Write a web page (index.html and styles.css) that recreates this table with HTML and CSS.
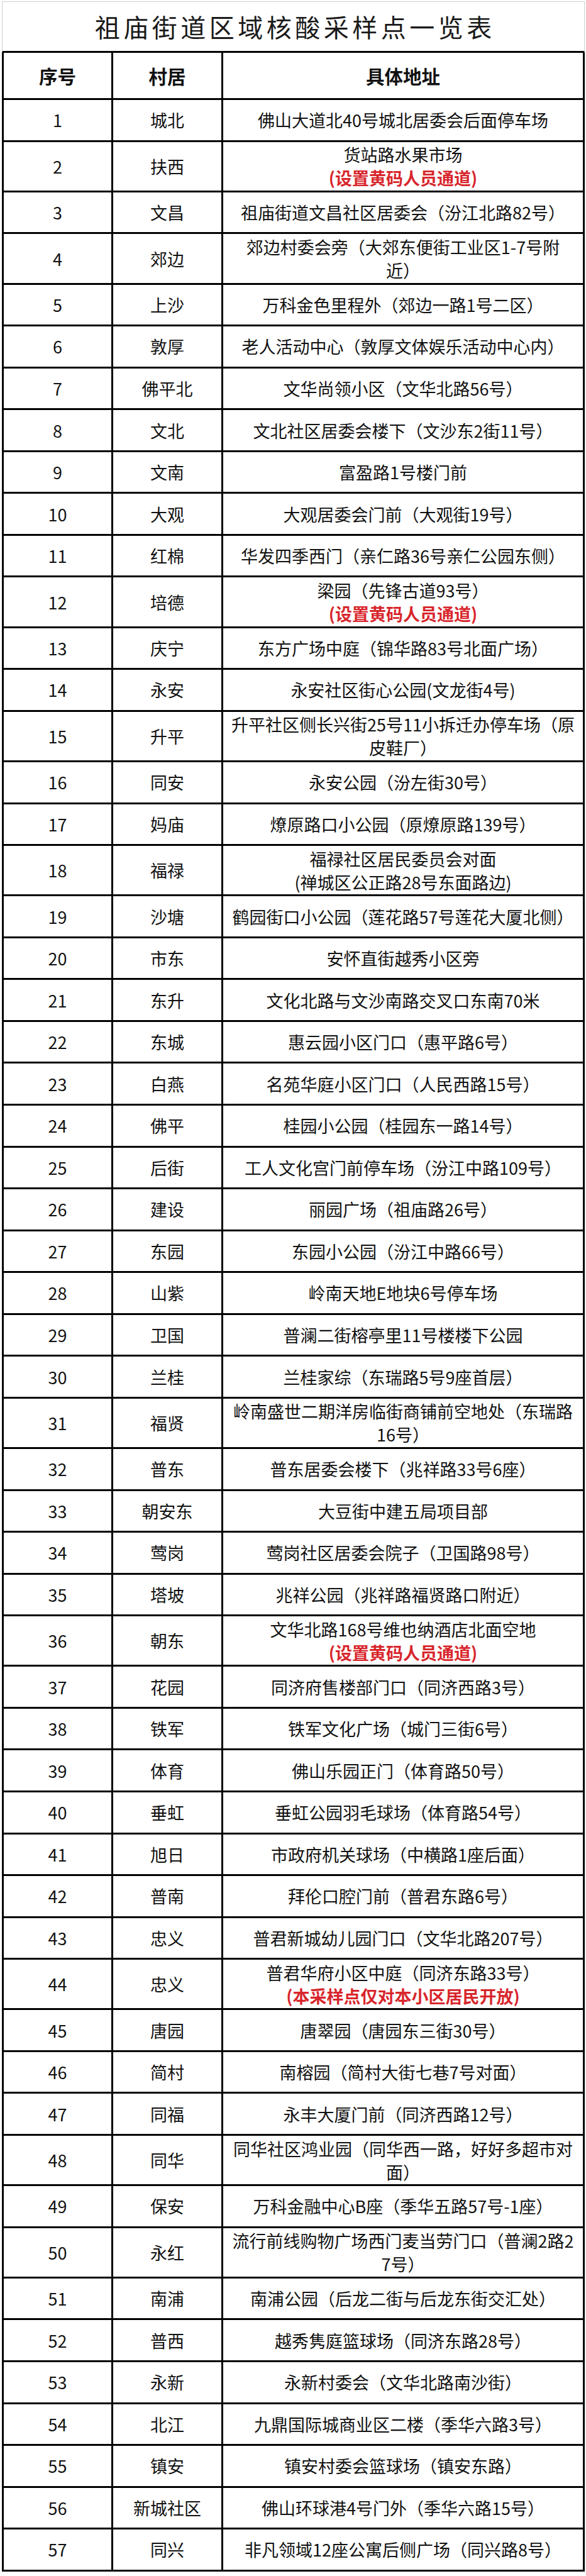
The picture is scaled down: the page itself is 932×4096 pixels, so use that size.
FILE: index.html
```html
<!DOCTYPE html>
<html lang="zh-CN">
<head>
<meta charset="utf-8">
<title>祖庙街道区域核酸采样点一览表</title>
<link rel="stylesheet" href="styles.css">
</head>
<body>
<div class="sheet">
  <div class="title">祖庙街道区域核酸采样点一览表</div>
  <div class="row head"><div class="cell">序号</div><div class="cell">村居</div><div class="cell">具体地址</div></div>
  <div class="row"><div class="cell">1</div><div class="cell">城北</div><div class="cell">佛山大道北40号城北居委会后面停车场</div></div>
  <div class="row tall"><div class="cell">2</div><div class="cell">扶西</div><div class="cell"><div class="lines">货站路水果市场<br><span class="warn">(设置黄码人员通道)</span></div></div></div>
  <div class="row"><div class="cell">3</div><div class="cell">文昌</div><div class="cell">祖庙街道文昌社区居委会（汾江北路82号）</div></div>
  <div class="row tall"><div class="cell">4</div><div class="cell">郊边</div><div class="cell"><div class="lines">郊边村委会旁（大郊东便街工业区1-7号附<br>近）</div></div></div>
  <div class="row"><div class="cell">5</div><div class="cell">上沙</div><div class="cell">万科金色里程外（郊边一路1号二区）</div></div>
  <div class="row"><div class="cell">6</div><div class="cell">敦厚</div><div class="cell">老人活动中心（敦厚文体娱乐活动中心内）</div></div>
  <div class="row"><div class="cell">7</div><div class="cell">佛平北</div><div class="cell">文华尚领小区（文华北路56号）</div></div>
  <div class="row"><div class="cell">8</div><div class="cell">文北</div><div class="cell">文北社区居委会楼下（文沙东2街11号）</div></div>
  <div class="row"><div class="cell">9</div><div class="cell">文南</div><div class="cell">富盈路1号楼门前</div></div>
  <div class="row"><div class="cell">10</div><div class="cell">大观</div><div class="cell">大观居委会门前（大观街19号）</div></div>
  <div class="row"><div class="cell">11</div><div class="cell">红棉</div><div class="cell">华发四季西门（亲仁路36号亲仁公园东侧）</div></div>
  <div class="row tall"><div class="cell">12</div><div class="cell">培德</div><div class="cell"><div class="lines">梁园（先锋古道93号）<br><span class="warn">(设置黄码人员通道)</span></div></div></div>
  <div class="row"><div class="cell">13</div><div class="cell">庆宁</div><div class="cell">东方广场中庭（锦华路83号北面广场）</div></div>
  <div class="row"><div class="cell">14</div><div class="cell">永安</div><div class="cell">永安社区街心公园(文龙街4号)</div></div>
  <div class="row tall"><div class="cell">15</div><div class="cell">升平</div><div class="cell"><div class="lines">升平社区侧长兴街25号11小拆迁办停车场（原<br>皮鞋厂）</div></div></div>
  <div class="row"><div class="cell">16</div><div class="cell">同安</div><div class="cell">永安公园（汾左街30号）</div></div>
  <div class="row"><div class="cell">17</div><div class="cell">妈庙</div><div class="cell">燎原路口小公园（原燎原路139号）</div></div>
  <div class="row tall"><div class="cell">18</div><div class="cell">福禄</div><div class="cell"><div class="lines">福禄社区居民委员会对面<br>(禅城区公正路28号东面路边)</div></div></div>
  <div class="row"><div class="cell">19</div><div class="cell">沙塘</div><div class="cell">鹤园街口小公园（莲花路57号莲花大厦北侧）</div></div>
  <div class="row"><div class="cell">20</div><div class="cell">市东</div><div class="cell">安怀直街越秀小区旁</div></div>
  <div class="row"><div class="cell">21</div><div class="cell">东升</div><div class="cell">文化北路与文沙南路交叉口东南70米</div></div>
  <div class="row"><div class="cell">22</div><div class="cell">东城</div><div class="cell">惠云园小区门口（惠平路6号）</div></div>
  <div class="row"><div class="cell">23</div><div class="cell">白燕</div><div class="cell">名苑华庭小区门口（人民西路15号）</div></div>
  <div class="row"><div class="cell">24</div><div class="cell">佛平</div><div class="cell">桂园小公园（桂园东一路14号）</div></div>
  <div class="row"><div class="cell">25</div><div class="cell">后街</div><div class="cell">工人文化宫门前停车场（汾江中路109号）</div></div>
  <div class="row"><div class="cell">26</div><div class="cell">建设</div><div class="cell">丽园广场（祖庙路26号）</div></div>
  <div class="row"><div class="cell">27</div><div class="cell">东园</div><div class="cell">东园小公园（汾江中路66号）</div></div>
  <div class="row"><div class="cell">28</div><div class="cell">山紫</div><div class="cell">岭南天地E地块6号停车场</div></div>
  <div class="row"><div class="cell">29</div><div class="cell">卫国</div><div class="cell">普澜二街榕亭里11号楼楼下公园</div></div>
  <div class="row"><div class="cell">30</div><div class="cell">兰桂</div><div class="cell">兰桂家综（东瑞路5号9座首层）</div></div>
  <div class="row tall"><div class="cell">31</div><div class="cell">福贤</div><div class="cell"><div class="lines">岭南盛世二期洋房临街商铺前空地处（东瑞路<br>16号）</div></div></div>
  <div class="row"><div class="cell">32</div><div class="cell">普东</div><div class="cell">普东居委会楼下（兆祥路33号6座）</div></div>
  <div class="row"><div class="cell">33</div><div class="cell">朝安东</div><div class="cell">大豆街中建五局项目部</div></div>
  <div class="row"><div class="cell">34</div><div class="cell">莺岗</div><div class="cell">莺岗社区居委会院子（卫国路98号）</div></div>
  <div class="row"><div class="cell">35</div><div class="cell">塔坡</div><div class="cell">兆祥公园（兆祥路福贤路口附近）</div></div>
  <div class="row tall"><div class="cell">36</div><div class="cell">朝东</div><div class="cell"><div class="lines">文华北路168号维也纳酒店北面空地<br><span class="warn">(设置黄码人员通道)</span></div></div></div>
  <div class="row"><div class="cell">37</div><div class="cell">花园</div><div class="cell">同济府售楼部门口（同济西路3号）</div></div>
  <div class="row"><div class="cell">38</div><div class="cell">铁军</div><div class="cell">铁军文化广场（城门三街6号）</div></div>
  <div class="row"><div class="cell">39</div><div class="cell">体育</div><div class="cell">佛山乐园正门（体育路50号）</div></div>
  <div class="row"><div class="cell">40</div><div class="cell">垂虹</div><div class="cell">垂虹公园羽毛球场（体育路54号）</div></div>
  <div class="row"><div class="cell">41</div><div class="cell">旭日</div><div class="cell">市政府机关球场（中横路1座后面）</div></div>
  <div class="row"><div class="cell">42</div><div class="cell">普南</div><div class="cell">拜伦口腔门前（普君东路6号）</div></div>
  <div class="row"><div class="cell">43</div><div class="cell">忠义</div><div class="cell">普君新城幼儿园门口（文华北路207号）</div></div>
  <div class="row tall"><div class="cell">44</div><div class="cell">忠义</div><div class="cell"><div class="lines">普君华府小区中庭（同济东路33号）<br><span class="warn">(本采样点仅对本小区居民开放)</span></div></div></div>
  <div class="row"><div class="cell">45</div><div class="cell">唐园</div><div class="cell">唐翠园（唐园东三街30号）</div></div>
  <div class="row"><div class="cell">46</div><div class="cell">简村</div><div class="cell">南榕园（简村大街七巷7号对面）</div></div>
  <div class="row"><div class="cell">47</div><div class="cell">同福</div><div class="cell">永丰大厦门前（同济西路12号）</div></div>
  <div class="row tall"><div class="cell">48</div><div class="cell">同华</div><div class="cell"><div class="lines">同华社区鸿业园（同华西一路，好好多超市对<br>面）</div></div></div>
  <div class="row"><div class="cell">49</div><div class="cell">保安</div><div class="cell">万科金融中心B座（季华五路57号-1座）</div></div>
  <div class="row tall"><div class="cell">50</div><div class="cell">永红</div><div class="cell"><div class="lines">流行前线购物广场西门麦当劳门口（普澜2路2<br>7号）</div></div></div>
  <div class="row"><div class="cell">51</div><div class="cell">南浦</div><div class="cell">南浦公园（后龙二街与后龙东街交汇处）</div></div>
  <div class="row"><div class="cell">52</div><div class="cell">普西</div><div class="cell">越秀隽庭篮球场（同济东路28号）</div></div>
  <div class="row"><div class="cell">53</div><div class="cell">永新</div><div class="cell">永新村委会（文华北路南沙街）</div></div>
  <div class="row"><div class="cell">54</div><div class="cell">北江</div><div class="cell">九鼎国际城商业区二楼（季华六路3号）</div></div>
  <div class="row"><div class="cell">55</div><div class="cell">镇安</div><div class="cell">镇安村委会篮球场（镇安东路）</div></div>
  <div class="row"><div class="cell">56</div><div class="cell">新城社区</div><div class="cell">佛山环球港4号门外（季华六路15号）</div></div>
  <div class="row"><div class="cell">57</div><div class="cell">同兴</div><div class="cell">非凡领域12座公寓后侧广场（同兴路8号）</div></div>
</div>
</body>
</html>
```

FILE: styles.css
```css
html, body {
  margin: 0;
  padding: 0;
  background: #ffffff;
}

body {
  font-family: "Noto Sans CJK SC", "Noto Sans", sans-serif;
  color: #111111;
}

.sheet {
  margin: 2px 0 0 3px;
  width: 927px;
}

.title {
  box-sizing: border-box;
  height: 82.4px;
  border: 1px solid #cfcfcf;
  border-bottom: 3px solid #000000;
  display: flex;
  align-items: center;
  justify-content: center;
  font-size: 40px;
  letter-spacing: 5.5px;
  padding-left: 5.5px;
  color: #1a1a1a;
}

.row {
  box-sizing: border-box;
  display: grid;
  grid-template-columns: 174px 175px 575px;
  border-left: 3px solid #000000;
  height: 66.55px;
}

.row.tall {
  height: 80.2px;
}

.row.head {
  height: 74.8px;
}

.cell {
  box-sizing: border-box;
  border-right: 3px solid #000000;
  border-bottom: 3px solid #000000;
  display: flex;
  align-items: center;
  justify-content: center;
  text-align: center;
  font-size: 27px;
  line-height: 37px;
  white-space: nowrap;
  min-width: 0;
}

.lines {
  text-align: center;
}

.row.head .cell {
  font-size: 29.5px;
  font-weight: bold;
}

.warn {
  color: #d8262c;
  font-weight: bold;
}
```
